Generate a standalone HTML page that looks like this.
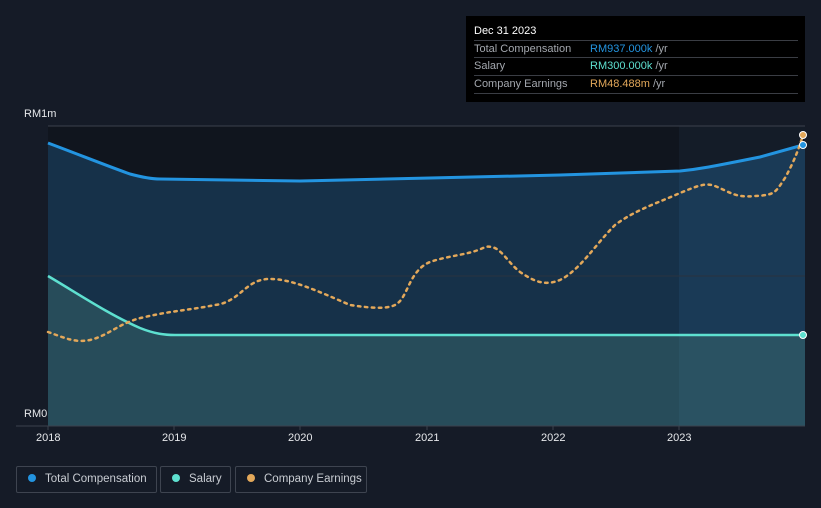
<!DOCTYPE html>
<html><head><style>
html,body{margin:0;width:821px;height:508px;overflow:hidden}
body{background:#151b27;font-family:"Liberation Sans",sans-serif;position:relative}
.tt{position:absolute;left:466px;top:16px;width:339px;height:86px;background:#000;color:#fff;font-size:11px}
.tt .h{position:absolute;left:8px;top:9px;font-size:11px}
.row{position:absolute;left:8px;width:324px;border-top:1px solid #3a3d44;height:17px;line-height:17px;white-space:nowrap}
.row span.l{color:#a3a7ae;display:inline-block;width:116px}
.lg{position:absolute;top:466px;height:27px;border:1px solid #3e4450;border-radius:2px;color:#c8ccd2;font-size:11.5px;line-height:25px;box-sizing:border-box;white-space:nowrap}
.lg i{display:inline-block;width:8px;height:8px;border-radius:50%;margin:0 9px 0 11px;vertical-align:0}
.ax{position:absolute;color:#e6e8eb;font-size:11px}
</style></head><body>
<svg width="821" height="508" style="position:absolute;left:0;top:0">
<rect x="48" y="126" width="757" height="300" fill="#10151e"/>
<rect x="679" y="126" width="126" height="300" fill="#141c28"/>
<path d="M48,143 C80,155 110,167 130,174 C145,178 155,179 160,179 L300,181 L430,178 L560,175 L680,171 C700,169 710,167 760,157 L803,145 L805,145 L805,426 L48,426Z" fill="#163149"/>
<path d="M679,171 C700,169 710,167 760,157 L803,145 L805,145 L805,426 L679,426Z" fill="#1a3a56"/>
<path d="M48,276 C80,295 110,315 140,328 C155,334 165,335 175,335 L805,335 L805,426 L48,426Z" fill="#274c5a"/>
<path d="M679,335 L805,335 L805,426 L679,426Z" fill="#2a5262"/>
<line x1="48" y1="276" x2="805" y2="276" stroke="#2a323e" stroke-width="1"/>
<line x1="48" y1="126" x2="805" y2="126" stroke="#3b414c" stroke-width="1"/>
<path d="M48,143 C80,155 110,167 130,174 C145,178 155,179 160,179 L300,181 L430,178 L560,175 L680,171 C700,169 710,167 760,157 L803,145" fill="none" stroke="#2394e0" stroke-width="3"/>
<path d="M48,276 C80,295 110,315 140,328 C155,334 165,335 175,335 L803,335" fill="none" stroke="#5ee0d0" stroke-width="2.5"/>
<path d="M48,332 C65,338 75,343 90,340 C110,335 120,322 145,317 C170,311 190,310 215,305 C240,302 245,280 268,279 C290,278 320,292 350,305 C370,308 390,310 398,303 C408,295 410,270 430,262 C450,255 470,255 485,247 C500,244 505,260 520,272 C535,282 545,286 560,280 C580,270 595,245 615,225 C635,210 660,202 680,193 C695,187 705,182 715,186 C730,192 735,198 755,196 C775,195 775,193 785,178 C795,160 800,145 803,135" fill="none" stroke="#e3a85a" stroke-width="2.5" stroke-dasharray="2.5,4.5" stroke-linecap="round"/>
<line x1="16" y1="426" x2="805" y2="426" stroke="#3b414c"/>
<line x1="48" y1="426" x2="48" y2="430" stroke="#3b414c"/>
<line x1="174" y1="426" x2="174" y2="430" stroke="#3b414c"/>
<line x1="300" y1="426" x2="300" y2="430" stroke="#3b414c"/>
<line x1="427" y1="426" x2="427" y2="430" stroke="#3b414c"/>
<line x1="553" y1="426" x2="553" y2="430" stroke="#3b414c"/>
<line x1="679" y1="426" x2="679" y2="430" stroke="#3b414c"/>
<circle cx="803" cy="135" r="3.5" fill="#e3a85a" stroke="#fff" stroke-width="1"/>
<circle cx="803" cy="145" r="3.5" fill="#2394e0" stroke="#fff" stroke-width="1"/>
<circle cx="803" cy="335" r="3.5" fill="#5ee0d0" stroke="#fff" stroke-width="1"/>
</svg>
<div class="ax" style="left:24px;top:108px">RM1m</div>
<div class="ax" style="left:24px;top:408px">RM0</div>
<div class="ax" style="left:36px;top:432px">2018</div>
<div class="ax" style="left:162px;top:432px">2019</div>
<div class="ax" style="left:288px;top:432px">2020</div>
<div class="ax" style="left:415px;top:432px">2021</div>
<div class="ax" style="left:541px;top:432px">2022</div>
<div class="ax" style="left:667px;top:432px">2023</div>
<div class="tt">
<div class="h">Dec 31 2023</div>
<div class="row" style="top:24px"><span class="l">Total Compensation</span><span style="color:#2394e0">RM937.000k</span> <span style="color:#a3a7ae">/yr</span></div>
<div class="row" style="top:41px"><span class="l">Salary</span><span style="color:#5ee0d0">RM300.000k</span> <span style="color:#a3a7ae">/yr</span></div>
<div class="row" style="top:59px;border-bottom:1px solid #3a3d44"><span class="l">Company Earnings</span><span style="color:#e3a85a">RM48.488m</span> <span style="color:#a3a7ae">/yr</span></div>
</div>
<div class="lg" style="left:16px;width:141px"><i style="background:#2394e0"></i>Total Compensation</div>
<div class="lg" style="left:160px;width:71px"><i style="background:#5ee0d0"></i>Salary</div>
<div class="lg" style="left:235px;width:132px"><i style="background:#e3a85a"></i>Company Earnings</div>
</body></html>
